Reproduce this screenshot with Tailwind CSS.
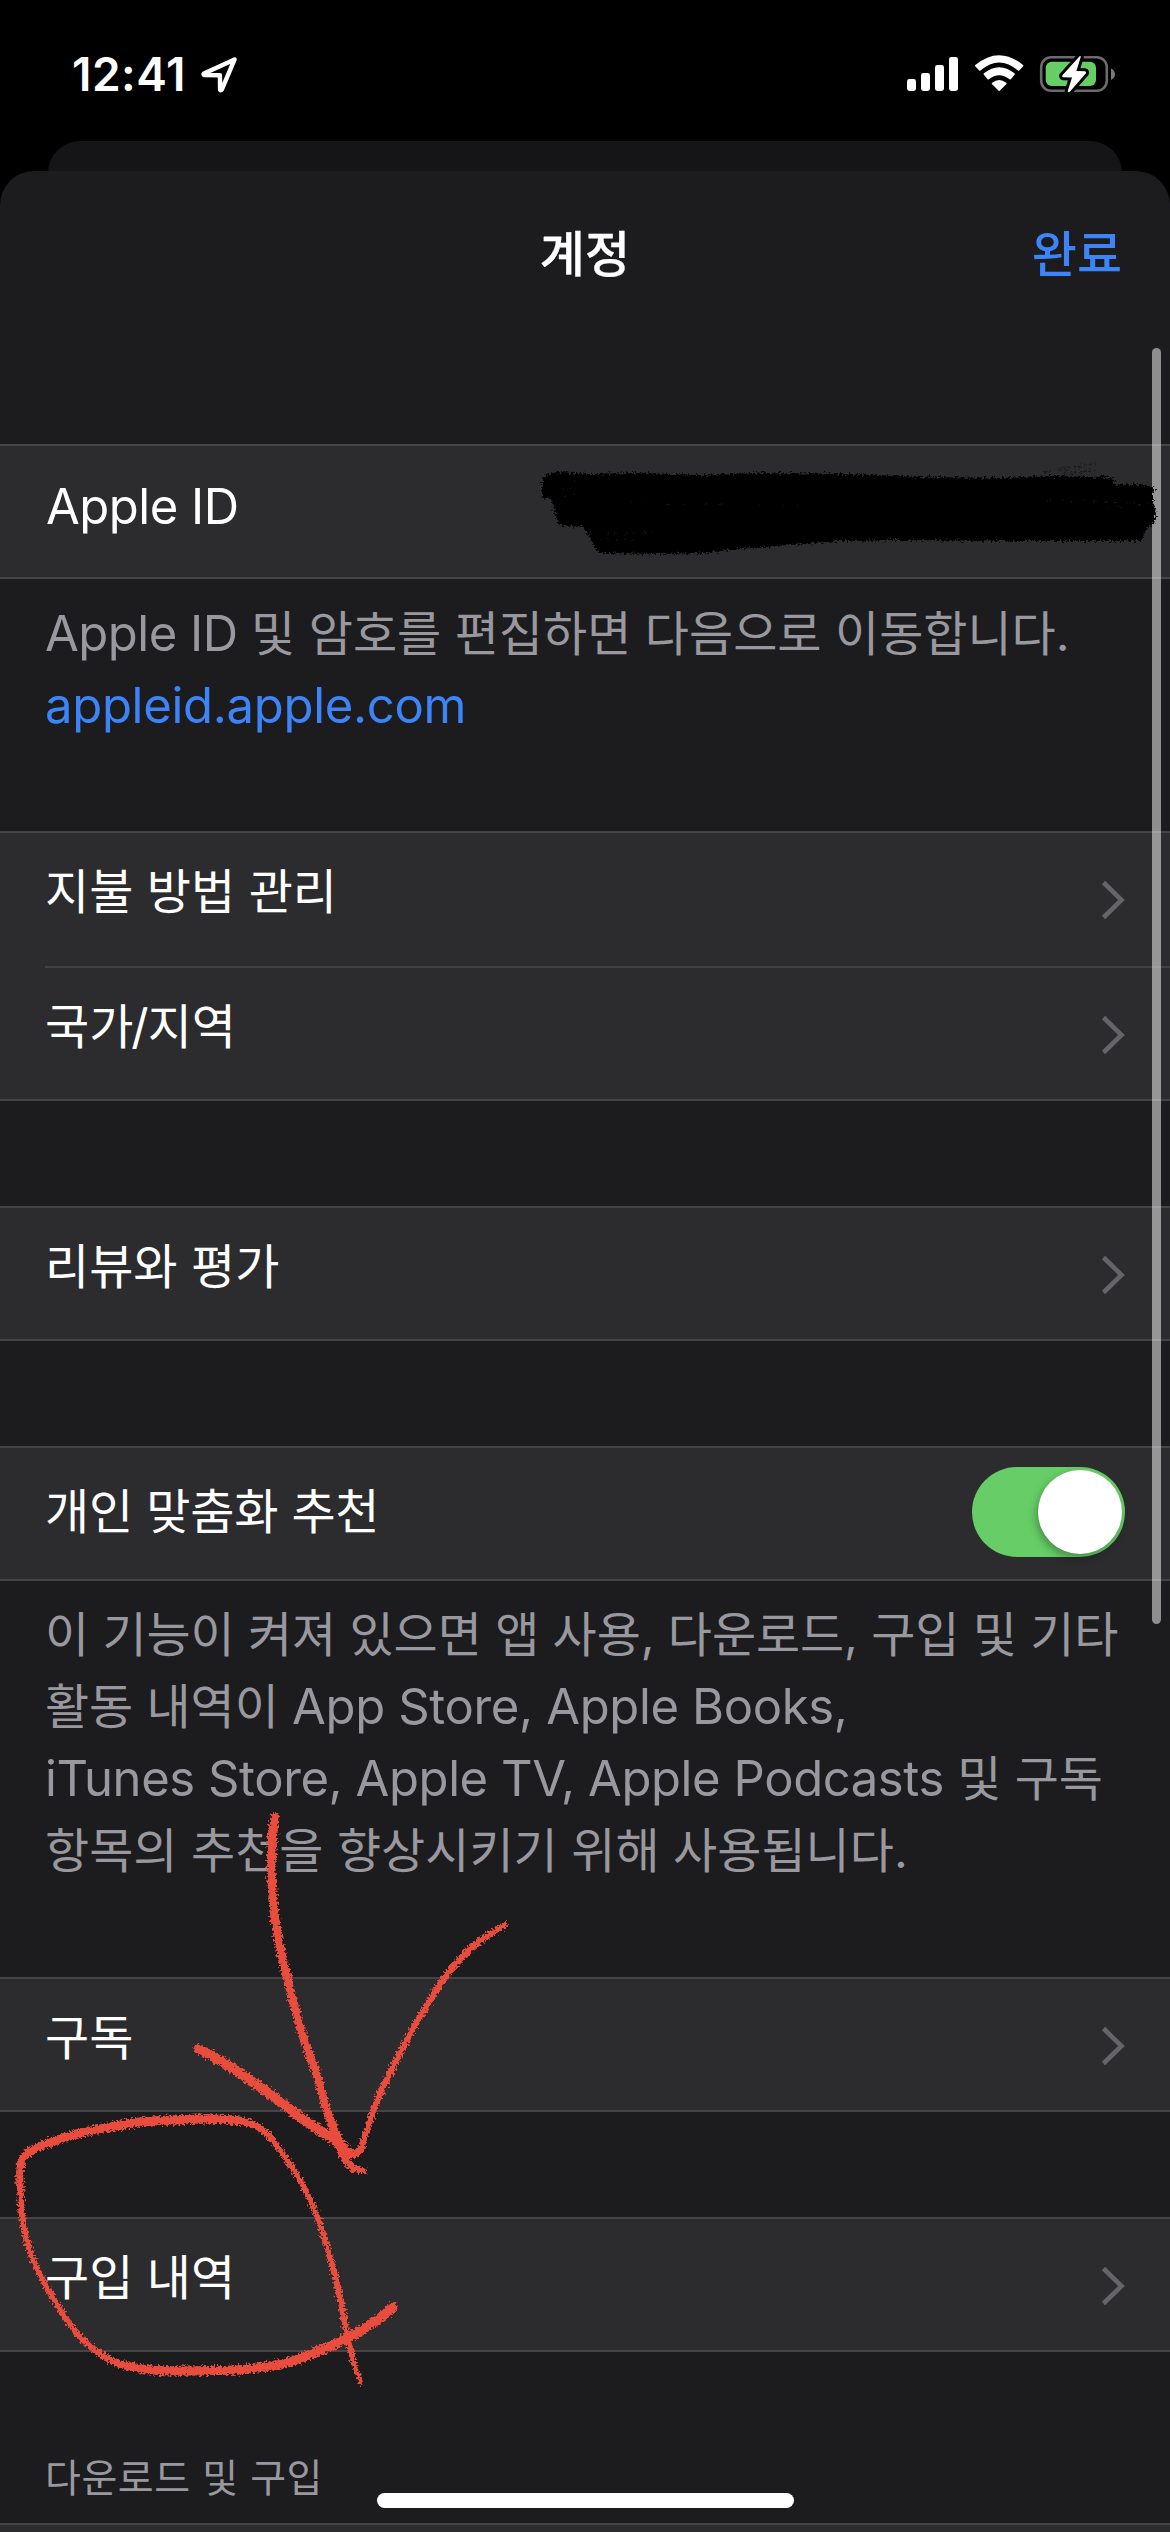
<!DOCTYPE html>
<html lang="ko">
<head>
<meta charset="utf-8">
<title>계정</title>
<script src="https://cdn.jsdelivr.net/npm/@tailwindcss/browser@4"></script>
</head>
<body class="bg-black">
<div class="relative flex h-[2532px] w-[1170px] flex-col overflow-hidden bg-black font-[Inter,'Noto_Sans_CJK_KR',sans-serif] text-[48px] text-white">

  <!-- Status bar -->
  <div class="flex h-[141px] shrink-0 items-start justify-between pr-[53px] pl-[72px]">
    <div class="flex items-start pt-[46px]">
      <span class="w-[127px] text-[46px] leading-[56px] font-semibold tracking-[0.5px] whitespace-nowrap">12:41</span>
      <svg class="mt-[8px] h-[40px] w-[40px]" viewBox="198 54 40 40" fill="none" stroke="#fff" stroke-width="4.4" stroke-linejoin="round"><path d="M233.6 59.4 203 73.4Q201.800 74.600 203.300 75L218.900 75.200 219.100 89.800Q219.800 91 220.700 89.800Z"/></svg>
    </div>
    <svg class="mt-[50px] h-[50px] w-[212px]" viewBox="905 50 212 50">
      <g fill="#fff">
        <rect x="907" y="79" width="9" height="12" rx="2.4"/>
        <rect x="921" y="73" width="9" height="18" rx="2.4"/>
        <rect x="935" y="65" width="9" height="26" rx="2.4"/>
        <rect x="949" y="57" width="9" height="34" rx="2.4"/>
        <path d="M999.2 91.2 991.9 84Q991.5 83.3 992.2 82.7Q999.2 77.2 1006.2 82.7Q1006.9 83.3 1006.500 84Z"/>
        <path d="M983.7 74.600Q983.200 74 983.9 73.300Q999.2 61 1014.500 73.300Q1015.200 74 1014.700 74.600L1010.800 79.300Q1010.200 79.800 1009.500 79.300Q999.2 71.200 988.900 79.300Q988.200 79.800 987.600 79.300Z"/>
        <path d="M975.200 66.300Q974.700 65.700 975.300 65Q999.200 45.300 1023.100 65Q1023.700 65.700 1023.200 66.300L1019.200 70.500Q1018.600 71.100 1017.900 70.500Q999.200 54.500 980.500 70.500Q979.800 71.100 979.200 70.500Z"/>
      </g>
      <rect x="1041.200" y="57.200" width="65.600" height="33.600" rx="10" fill="none" stroke="#6b6b6d" stroke-width="2.600"/>
      <path d="M1111 68.500Q1115 70.500 1115 74.200T1111 79.900Z" fill="#7a7a7c"/>
      <rect x="1045.700" y="61.700" width="50.300" height="24.300" rx="6" fill="#67ce67"/>
      <path d="M1079.600 56.300 1062.200 75.500Q1061.800 77 1063.200 77.200L1072 77.500 1067.600 91.500Q1068.500 93 1069.800 91.800L1086 73.200Q1086.600 71.700 1085 71.300L1076.400 71 1080.800 56.800Q1080.600 55.500 1079.600 56.300Z" fill="#fff" stroke="#000" stroke-width="6" stroke-linejoin="round" paint-order="stroke"/>
    </svg>
  </div>

  <!-- Edge of the sheet underneath -->
  <div class="mx-[48px] -mb-[20px] h-[50px] shrink-0 rounded-t-[32px] bg-[#151517]"></div>

  <!-- Account sheet -->
  <div class="relative flex grow flex-col overflow-hidden rounded-t-[34px] bg-[#1c1c1e]">
    <header class="grid h-[273px] shrink-0 grid-cols-3 items-start pt-[54px] leading-[59px] font-medium">
      <span></span>
      <h1 class="text-center text-[49px] tracking-[0.2px] [-webkit-text-stroke:0.3px_#fff]">계정</h1>
      <a class="pr-[48px] text-right text-[49px] text-[#3c84f7]">완료</a>
    </header>

    <section class="h-[135px] shrink-0 border-y-2 border-[#454548] bg-[#2c2c2e] pl-[46px]">
      <p class="text-[49px] leading-[121px] tracking-[-0.5px]">Apple ID</p>
    </section>
    <div class="h-[252px] shrink-0 pt-[19px] pl-[45px] leading-[72px] whitespace-nowrap text-[#98989e]">
      <p><span class="text-[49px] tracking-[-0.5px]">Apple ID</span> 및 암호를 편집하면 다음으로 이동합니다.</p>
      <p class="text-[49px] tracking-[-0.3px] text-[#3c84f7]">appleid.apple.com</p>
    </div>

    <section class="flex h-[270px] shrink-0 flex-col border-y-2 border-[#454548] bg-[#2c2c2e] pl-[45px]">
      <div class="flex h-[135px] justify-between border-b-2 border-[#424245] pr-[44px]">
        <span class="leading-[118px]">지불 방법 관리</span>
        <svg class="mt-[44px] h-[46px] w-[26px]" viewBox="0 0 26 46" fill="none" stroke="#656569" stroke-width="4.600"><path d="M3.500 5.500 21.500 23 3.500 40.500"/></svg>
      </div>
      <div class="flex h-[131px] justify-between pr-[44px]">
        <span class="leading-[118px]">국가<span class="-mr-[1px] -ml-[2px]">/</span>지역</span>
        <svg class="mt-[44px] h-[46px] w-[26px]" viewBox="0 0 26 46" fill="none" stroke="#656569" stroke-width="4.600"><path d="M3.500 5.500 21.500 23 3.500 40.500"/></svg>
      </div>
    </section>

    <section class="mt-[105px] flex h-[135px] shrink-0 justify-between border-y-2 border-[#454548] bg-[#2c2c2e] pr-[44px] pl-[45px]">
      <span class="leading-[118px]">리뷰와 평가</span>
      <svg class="mt-[44px] h-[46px] w-[26px]" viewBox="0 0 26 46" fill="none" stroke="#656569" stroke-width="4.600"><path d="M3.500 5.500 21.500 23 3.500 40.500"/></svg>
    </section>

    <section class="mt-[105px] flex h-[135px] shrink-0 justify-between border-y-2 border-[#454548] bg-[#2c2c2e] pr-[45px] pl-[45px]">
      <span class="leading-[127px] tracking-[-0.2px]">개인 맞춤화 추천</span>
      <span class="mt-[19px] flex h-[90px] w-[153px] justify-end rounded-full bg-[#67ce67] p-[3px]"><span class="h-[84px] w-[84px] rounded-full bg-white shadow-[-2px_4px_8px_rgba(0,0,0,0.3)]"></span></span>
    </section>
    <div class="h-[396px] shrink-0 pt-[18px] pl-[45px] leading-[72px] tracking-[-0.1px] whitespace-nowrap text-[#98989e]">
      <p>이 기능이 켜져 있으면 앱 사용, 다운로드, 구입 및 기타</p>
      <p>활동 내역이 <span class="text-[49px] tracking-[-0.36px]">App Store, Apple Books,</span></p>
      <p><span class="text-[49px] tracking-[-0.420px]">iTunes Store, Apple TV, Apple Podcasts</span> 및 구독</p>
      <p class="tracking-normal">항목의 추천을 향상시키기 위해 사용됩니다.</p>
    </div>

    <section class="flex h-[135px] shrink-0 justify-between border-y-2 border-[#454548] bg-[#2c2c2e] pr-[44px] pl-[45px]">
      <span class="leading-[118px]">구독</span>
      <svg class="mt-[44px] h-[46px] w-[26px]" viewBox="0 0 26 46" fill="none" stroke="#656569" stroke-width="4.600"><path d="M3.500 5.500 21.500 23 3.500 40.500"/></svg>
    </section>

    <section class="mt-[105px] flex h-[135px] shrink-0 justify-between border-y-2 border-[#454548] bg-[#2c2c2e] pr-[44px] pl-[45px]">
      <span class="leading-[118px]">구입 내역</span>
      <svg class="mt-[44px] h-[46px] w-[26px]" viewBox="0 0 26 46" fill="none" stroke="#656569" stroke-width="4.600"><path d="M3.500 5.500 21.500 23 3.500 40.500"/></svg>
    </section>
    <h2 class="h-[171px] shrink-0 pt-[102px] pl-[45px] text-[39px] leading-[48px] tracking-[0.550px] text-[#98989e]">다운로드 및 구입</h2>
    <div class="h-[9px] shrink-0 border-t-2 border-[#454548] bg-[#2c2c2e]"></div>

  </div>

  <!-- Scroll indicator and home indicator -->
  <div class="absolute top-[348px] left-[1152px] h-[1276px] w-[9px] rounded-full bg-white/50"></div>
  <div class="absolute top-[2493px] left-[377px] h-[15px] w-[417px] rounded-full bg-white"></div>

  <!-- Hand-drawn marks -->
  <svg class="absolute inset-0 h-[2532px] w-[1170px]" viewBox="0 0 1170 2532" fill="none" stroke-linecap="round" stroke-linejoin="round">
    <defs>
      <filter id="rough" filterUnits="userSpaceOnUse" x="0" y="400" width="1170" height="2132">
        <feTurbulence type="fractalNoise" baseFrequency="0.45" numOctaves="2" seed="4" result="n"/>
        <feDisplacementMap in="SourceGraphic" in2="n" scale="8" xChannelSelector="R" yChannelSelector="G"/>
      </filter>
    </defs>
    <g filter="url(#rough)">
      <path fill="#000" d="M542 480 546 475 558 472 590 474 640 473 700 475 760 473 850 474 920 477 1000 478 1050 476 1112 477 1116 485 1140 484 1154 488 1153 500 1156 514 1154 524 1145 530 1142 541 1080 541 1010 541 900 540 840 541 790 545 740 549 705 553 660 554 598 553 592 542 584 527 560 526 554 511 551 499 542 498Z"/>
      <path stroke="#000" stroke-width="2" stroke-dasharray="1 4" stroke-opacity="0.400" d="M1045 472Q1075 467 1095 464M1065 474 1096 470"/>
      <g stroke="#2c2c2e" stroke-width="0.8" stroke-opacity="0.7">
        <path stroke-dasharray="1 14 1 22" d="M630 502 690 504 760 505 800 505"/>
        <path stroke-dasharray="1 8 2 11" d="M1040 500 1090 501 1130 503M1108 507 1152 505M1125 502 1148 503"/>
        <path stroke-dasharray="1 7 1 9" d="M590 532 618 534 655 532M598 538 640 540M562 490 575 488M565 496 574 494M566 484 578 482"/>
      </g>
      <g id="marks" stroke="#e84d3e"></g>
    </g>
  </svg>
</div>

<script>
// Pencil strokes as [x, y, width] samples, smoothed with a Catmull-Rom spline.
const strokes = [
  [[275,1817,8],[273,1830,9],[272,1847,9],[271.5,1877,8.5],[275.5,1923,8.5],[286,1973,8.5],[302,2033,8],[316,2073,8.5],[327,2110,8],[339,2143,9],[345,2158,8],[352,2167,7.5],[364,2171,5.5]],
  [[198,2049,9],[221,2061,10],[250,2080,10],[275,2098,10],[307,2122,10],[336,2141,10],[347,2151,10],[354,2154,8],[360,2150,6.5],[366,2133,6],[378.6,2097,6.2],[396.5,2060,6.2],[418,2020,6.2],[443,1980,6.5],[457,1963,6.5],[471,1948,6.5],[487,1936,6],[505,1925,5.5]],
  [[361,2383,4],[354,2363,5],[348,2340,6],[339,2293,6],[325,2240,5.8],[307,2193,5.5],[282,2153,5.5],[262.5,2130,6.5],[243,2121.5,8],[211,2119,9],[175,2120,9],[143,2121.700,9],[115,2126,9],[86,2131.700,8.5],[60,2139,8.5],[37,2147.500,8],[23,2158,8],[20,2172,7],[20.400,2190,6.5],[23,2223,6],[32,2256.700,5.8],[50,2293,5.5],[78.600,2335,5.8],[110.700,2360,7],[143,2369,8.5],[178.600,2371,9],[211,2370.500,9],[243,2369.500,9],[286,2363,9],[321,2350,9.5],[350,2336.700,9.5],[378.600,2319,9.5],[393,2307,9.5]]
];
const g = document.getElementById('marks');
const NS = 'http://www.w3.org/2000/svg';
const cr = (a, b, c, d, t) => 0.5 * (2*b + (c-a)*t + (2*a-5*b+4*c-d)*t*t + (3*b-a-3*c+d)*t*t*t);
for (const s of strokes) {
  for (let i = 0; i < s.length - 1; i++) {
    const p = [s[Math.max(i-1,0)], s[i], s[i+1], s[Math.min(i+2,s.length-1)]];
    let prev = s[i];
    for (let k = 1; k <= 8; k++) {
      const q = [0,1,2].map(n => cr(p[0][n], p[1][n], p[2][n], p[3][n], k/8));
      const l = document.createElementNS(NS, 'path');
      l.setAttribute('d', `M${prev[0]} ${prev[1]}L${q[0]} ${q[1]}`);
      l.setAttribute('stroke-width', q[2]);
      g.appendChild(l);
      prev = q;
    }
  }
}
</script>
</body>
</html>
